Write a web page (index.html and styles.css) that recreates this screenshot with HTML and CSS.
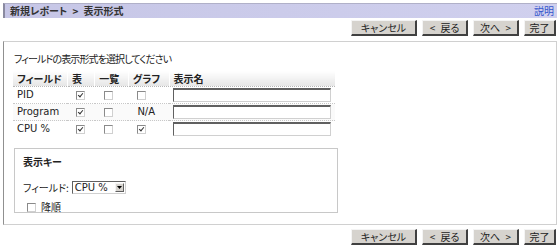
FILE: index.html
```html
<!DOCTYPE html>
<html>

<head>
  <meta charset="utf-8">
  <title>表示形式</title>
  <link rel="stylesheet" href="styles.css">
</head>

<body>

  <!-- Title bar -->
  <div class="title-bar">
    <span class="title">新規レポート &gt; 表示形式</span>
    <a class="help" href="#">説明</a>
  </div>

  <!-- Wizard buttons (top) -->
  <div class="button-row">
    <button class="btn btn-cancel">キャンセル</button>
    <button class="btn btn-back">&lt; 戻る</button>
    <button class="btn btn-next">次へ &gt;</button>
    <button class="btn btn-done">完了</button>
  </div>

  <!-- Main panel -->
  <div class="panel">
    <p class="intro">フィールドの表示形式を選択してください</p>

    <table class="fields">
      <tr>
        <th class="col-name">フィールド</th>
        <th class="col-table">表</th>
        <th class="col-list">一覧</th>
        <th class="col-graph">グラフ</th>
        <th class="col-label">表示名</th>
      </tr>
      <tr>
        <td>PID</td>
        <td><span class="check on"></span></td>
        <td><span class="check"></span></td>
        <td><span class="check"></span></td>
        <td><input type="text" class="label-input"></td>
      </tr>
      <tr>
        <td>Program</td>
        <td><span class="check on"></span></td>
        <td><span class="check"></span></td>
        <td>N/A</td>
        <td><input type="text" class="label-input"></td>
      </tr>
      <tr>
        <td>CPU %</td>
        <td><span class="check on"></span></td>
        <td><span class="check"></span></td>
        <td><span class="check on"></span></td>
        <td><input type="text" class="label-input"></td>
      </tr>
    </table>

    <!-- Sort key -->
    <div class="key-box">
      <div class="key-title">表示キー</div>
      <div class="key-field">
        <span>フィールド:</span>
        <span class="select">
          <span class="select-value">CPU %</span>
          <span class="select-arrow">
            <svg width="5" height="3" viewBox="0 0 5 3"><path d="M0 0h5L2.5 3z" fill="#000"/></svg>
          </span>
        </span>
      </div>
      <div class="key-order">
        <span class="check"></span>
        <span>降順</span>
      </div>
    </div>
  </div>

  <!-- Wizard buttons (bottom) -->
  <div class="button-row">
    <button class="btn btn-cancel">キャンセル</button>
    <button class="btn btn-back">&lt; 戻る</button>
    <button class="btn btn-next">次へ &gt;</button>
    <button class="btn btn-done">完了</button>
  </div>

</body>

</html>
```

FILE: styles.css
```css
body {
  margin: 0;
  padding: 3px;
  font-family: 'DejaVu Sans', 'Noto Sans CJK JP', sans-serif;
  font-size: 10px;
  line-height: 12px;
  color: #222;
  background-color: #ffffff;
}

.title,
.help,
.btn,
.intro,
.fields th,
.key-title,
.key-field,
.key-order {
  font-family: 'Noto Sans CJK JP', sans-serif;
  font-feature-settings: "palt";
}

/* Title bar */
.title-bar {
  display: flex;
  justify-content: space-between;
  align-items: center;
  height: 14px;
  padding: 0 3px 0 5px;
  background: linear-gradient(to right, #c6c6e6, #d0d0ee);
  border-top: 1px solid #b0b0c8;
  border-left: 2px solid #8a8aa0;
}

.title {
  font-weight: bold;
  color: #333;
  word-spacing: 3px;
}

.help {
  color: #3355cc;
  text-decoration: none;
}

/* Wizard buttons */
.button-row {
  display: flex;
  justify-content: flex-end;
  gap: 5px;
  padding: 2px 1px 0 0;
}

.btn {
  height: 16px;
  padding: 0;
  font-size: 10px;
  line-height: 12px;
  color: #222;
  background-color: #d6d3ce;
  border: 1px solid;
  border-color: #f4f4f4 #404040 #404040 #f4f4f4;
  border-right-width: 2px;
  border-bottom-width: 2px;
  word-spacing: 3px;
}

.btn-cancel { width: 66px; }
.btn-back { width: 46px; }
.btn-next { width: 46px; }
.btn-done { width: 32px; }

/* Main panel */
.panel {
  margin: 5px 0 2px;
  height: 184px;
  padding: 0 9px;
  border: 1px solid #d0d0d0;
  border-left-color: #909090;
  box-sizing: border-box;
}

.intro {
  margin: 11px 0 6px 1px;
  letter-spacing: -0.9px;
}

/* Field table */
.fields {
  width: 322px;
  border-collapse: collapse;
}

.fields th {
  height: 15px;
  padding: 0 4px;
  text-align: left;
  white-space: nowrap;
  font-weight: bold;
  color: #222;
  background: linear-gradient(#ffffff, #e6e6e6);
  border-left: 1px solid #ffffff;
  border-bottom: 1px dotted #b8b8b8;
}

.fields th:first-child {
  border-left: none;
}

.fields td {
  height: 16px;
  padding: 0 4px;
  white-space: nowrap;
  border-bottom: 1px dotted #c8c8c8;
}

.fields tr:last-child td {
  border-bottom: none;
}

.fields tr:nth-child(3) td {
  background-color: #fafafa;
}

.col-name { width: 46px; }
.col-table { width: 19px; }
.col-list { width: 25px; }
.col-graph { width: 32px; }

.fields td:nth-child(2),
.fields td:nth-child(3),
.fields td:nth-child(4) {
  padding-left: 9px;
}

.label-input {
  display: block;
  width: 158px;
  height: 14px;
  margin: 0;
  padding: 0;
  box-sizing: border-box;
  border: 1px solid;
  border-color: #606060 #d0d0d0 #d0d0d0 #606060;
  border-top-width: 2px;
}

/* Flat checkbox */
.check {
  display: inline-block;
  position: relative;
  width: 9px;
  height: 9px;
  vertical-align: middle;
  border: 1px solid #8a8a8a;
  border-right-color: #d0d0d0;
  border-bottom-color: #d0d0d0;
  background-color: #ffffff;
  box-sizing: border-box;
}

.check.on::after {
  content: "";
  position: absolute;
  left: 2px;
  top: 0;
  width: 2px;
  height: 4px;
  border: solid #333;
  border-width: 0 1.5px 1.5px 0;
  transform: rotate(40deg);
}

/* Sort key box */
.key-box {
  width: 324px;
  height: 65px;
  margin: 11px 0 0 1px;
  padding: 7px 8px;
  border: 1px solid #c8c8c8;
  box-sizing: border-box;
}

.key-title {
  font-weight: bold;
  margin-bottom: 13px;
}

.key-field {
  display: flex;
  align-items: center;
  gap: 3px;
}

.select {
  display: flex;
  align-items: center;
  justify-content: space-between;
  width: 54px;
  height: 13px;
  padding: 0 1px 0 2px;
  border: 1px solid;
  border-color: #606060 #d0d0d0 #d0d0d0 #606060;
  box-sizing: border-box;
  font-family: 'DejaVu Sans', sans-serif;
}

.select-arrow {
  display: flex;
  align-items: center;
  justify-content: center;
  width: 9px;
  height: 9px;
  background-color: #d6d3ce;
  border: 1px solid;
  border-color: #f4f4f4 #606060 #606060 #f4f4f4;
  box-sizing: border-box;
}

.key-order {
  display: flex;
  align-items: center;
  gap: 5px;
  margin: 7px 0 0 4px;
}
```
